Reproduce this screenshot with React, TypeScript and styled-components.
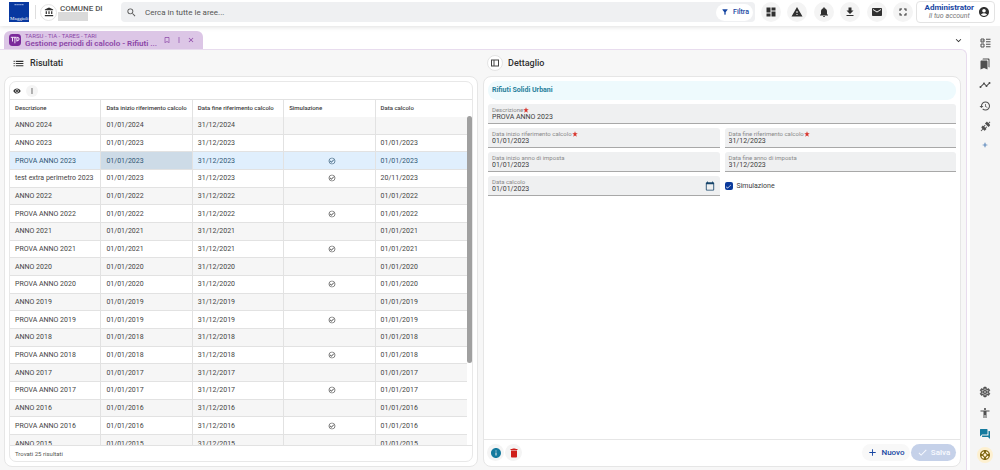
import React from "react";
import styled, { createGlobalStyle, css } from "styled-components";
import {
  MdAccountBalance, MdSearch, MdFilterAlt, MdDashboard, MdWarning, MdNotifications, MdDownload, MdEmail,
  MdFullscreen, MdAccountCircle, MdBookmarkBorder, MdMoreVert, MdClose, MdExpandMore, MdList,
  MdVisibility, MdCheckCircleOutline, MdBookmarks, MdTimeline, MdHistory, MdAdd, MdOutlineSettings,
  MdAccessibility, MdQuestionAnswer, MdSupport, MdInfo, MdDelete, MdCheck, MdCalendarToday,
} from "react-icons/md";

const Global = createGlobalStyle`
  * { box-sizing: border-box; }
  body { margin: 0; background: #fff; color: #3c3c3c; font-family: Roboto, "Liberation Sans", sans-serif; font-size: 7px; }
  button, input { font-family: inherit; font-size: inherit; color: inherit; margin: 0; padding: 0; border: 0; background: none; }
  svg { display: block; flex: none; }
`;

const Page = styled.div`
  display: flex;
  flex-direction: column;
  height: 100vh;
  overflow: hidden;
`;

const TopBar = styled.header`
  display: flex;
  align-items: center;
  flex: none;
  height: 26px;
  padding: 0 5px 2px 9px;
  box-shadow: 0 1px 5px rgba(0, 0, 0, 0.13);
`;

const Divider = styled.span`
  width: 1px;
  height: 14px;
  margin: 0 4px 0 6px;
  background: #dedede;
`;

const RoundButton = styled.button<{ $size: number; $outlined?: boolean; $plain?: boolean }>`
  display: flex;
  align-items: center;
  justify-content: center;
  flex: none;
  width: ${(p) => p.$size}px;
  height: ${(p) => p.$size}px;
  border-radius: 50%;
  color: #303030;
  background: ${(p) => (p.$outlined ? "#fff" : p.$plain ? "transparent" : "#f4f4f4")};
  ${(p) => p.$outlined && css`border: 1px solid #e4e4e4;`}
`;

const Entity = styled.div`
  width: 64px;
  padding: 2px 0 0 3px;
  font-size: 8px;
  line-height: 7px;
  font-weight: 500;
  color: #555;
`;

const Redacted = styled.div`
  width: 30px;
  height: 9px;
  margin-left: -2px;
  background: #dadada;
`;

const Search = styled.div`
  display: flex;
  align-items: center;
  flex: 1;
  height: 20px;
  padding: 0 2px 0 5px;
  border-radius: 4px;
  background: #eff0f2;
  color: #555;
`;

const SearchInput = styled.input`
  flex: 1;
  min-width: 0;
  padding-left: 8px;
  font-size: 8px;
  outline: 0;
  &::placeholder { color: #555; opacity: 1; }
`;

const FilterButton = styled.button`
  display: flex;
  align-items: center;
  gap: 4px;
  height: 17px;
  padding: 0 4px 0 5px;
  border-radius: 9px;
  background: #fff;
  color: #1746a2;
  font-size: 7px;
  font-weight: 500;
`;

const Tools = styled.nav`
  display: flex;
  justify-content: space-between;
  width: 152px;
  margin: 0 3px 0 6px;
`;

const Account = styled.button`
  display: flex;
  align-items: center;
  justify-content: flex-end;
  gap: 4px;
  width: 79px;
  height: 22px;
  padding: 0 4px 0 0;
  border: 1px solid #e3e3e3;
  border-radius: 4px;
  color: #303030;
  text-align: center;
`;

const AccountName = styled.strong`
  display: block;
  font-size: 8px;
  line-height: 8px;
  color: #1746a2;
`;

const AccountHint = styled.em`
  display: block;
  font-size: 7px;
  line-height: 8px;
  color: #777;
`;

const Body = styled.div`
  display: flex;
  flex: 1;
  min-height: 0;
`;

const Main = styled.main`
  display: flex;
  flex-direction: column;
  flex: 1;
  min-width: 0;
  padding-right: 3px;
`;

const TabBar = styled.div`
  display: flex;
  align-items: flex-end;
  justify-content: space-between;
  flex: none;
  height: 23px;
  padding: 0 0 0 4px;
`;

const Tab = styled.div`
  display: flex;
  align-items: center;
  width: 199px;
  height: 18px;
  padding: 0 6px 0 5px;
  border-radius: 6px 6px 0 0;
  background: #dcc6e6;
  color: #8b45a6;
`;

const TabText = styled.div`
  flex: 1;
  min-width: 0;
  padding-left: 4px;
`;

const TabArea = styled.div`
  font-size: 6px;
  line-height: 7px;
`;

const TabTitle = styled.div`
  font-size: 8px;
  line-height: 9px;
  font-weight: 600;
  white-space: nowrap;
`;

const TabButton = styled.button`
  display: flex;
  align-items: center;
  justify-content: center;
  width: 12px;
  height: 12px;
`;

const Workspace = styled.div`
  display: grid;
  grid-template-columns: 474fr 478fr;
  gap: 5px;
  flex: 1;
  min-height: 0;
  padding: 0 5px 3px 4px;
  border: 1px solid #e8dcee;
  border-left: 0;
  border-bottom: 0;
  border-top-right-radius: 6px;
  background: #f7f7f7;
`;

const Panel = styled.section`
  display: flex;
  flex-direction: column;
  min-width: 0;
  min-height: 0;
`;

const PanelHead = styled.div<{ $inset: number }>`
  display: flex;
  align-items: center;
  gap: 5px;
  flex: none;
  height: 26px;
  padding-left: ${(p) => p.$inset}px;
  color: #303030;
`;

const Heading = styled.h2`
  margin: 0;
  font-size: 9px;
  line-height: 12px;
  font-weight: 500;
`;

const Card = styled.div<{ $padded?: boolean }>`
  display: flex;
  flex-direction: column;
  flex: 1;
  min-height: 0;
  padding: ${(p) => (p.$padded ? "4px" : "0")};
  border: 1px solid #e6e6e6;
  border-radius: 8px;
  background: #fff;
`;

const ResultBox = styled.div`
  display: flex;
  flex-direction: column;
  flex: 1;
  min-height: 0;
  border: 1px solid #e8e8e8;
  border-radius: 7px;
  overflow: hidden;
`;

const ResultTools = styled.div`
  display: flex;
  align-items: center;
  gap: 3px;
  flex: none;
  height: 17px;
  padding-left: 1px;
`;

const TableArea = styled.div`
  display: flex;
  flex: 1;
  min-height: 0;
  overflow: hidden;
  border-top: 1px solid #e2e2e2;
`;

const TableColumn = styled.div`
  flex: 1;
  min-width: 0;
`;

const Table = styled.table`
  width: 100%;
  height: 353px;
  border-collapse: separate;
  border-spacing: 0;
  table-layout: fixed;
`;

const HeadCell = styled.th`
  height: 17px;
  padding: 0 0 2px 5px;
  border-right: 1px solid #e2e2e2;
  text-align: left;
  font-size: 6px;
  font-weight: 500;
  white-space: nowrap;
  &:last-child { border-right: 0; }
`;

const Cell = styled.td<{ $focused?: boolean }>`
  padding: 0 0 0 5px;
  border-right: 1px solid #e2e2e2;
  border-bottom: 1px solid #e2e2e2;
  white-space: nowrap;
  line-height: 10px;
  ${(p) => p.$focused && css`background: #cddbe7;`}
  &:last-child { border-right: 0; }
  svg { margin: 0 auto; }
`;

const Row = styled.tr<{ $selected?: boolean }>`
  color: #444;
  &:nth-child(odd) { background: #f6f6f6; }
  ${(p) => p.$selected && css`
    && { background: #e0effd; color: #2f5673; }
  `}
`;

const Track = styled.div`
  flex: none;
  width: 5px;
  padding-top: 16px;
`;

const Thumb = styled.div`
  height: 75%;
  border-radius: 3px;
  background: #a0a0a0;
`;

const ResultFoot = styled.div`
  flex: none;
  height: 16px;
  padding-left: 5px;
  border-top: 1px solid #e2e2e2;
  font-size: 6px;
  line-height: 16px;
  color: #555;
`;

const Form = styled.form`
  display: grid;
  grid-template-columns: 1fr 1fr;
  align-content: start;
  gap: 4px 5px;
  flex: 1;
  padding: 4px;
`;

const Banner = styled.div`
  grid-column: 1 / -1;
  height: 19px;
  padding-left: 4px;
  border-radius: 9px;
  background: #eefafd;
  color: #28809c;
  font-weight: 700;
  line-height: 19px;
`;

const FieldBox = styled.div<{ $wide?: boolean }>`
  display: flex;
  align-items: center;
  height: 20px;
  padding: 0 4px;
  border-bottom: 1px solid #a8a8a8;
  border-radius: 3px 3px 0 0;
  background: #eff0f1;
  ${(p) => p.$wide && css`grid-column: 1 / -1;`}
`;

const FieldText = styled.label`
  display: flex;
  flex-direction: column;
  flex: 1;
`;

const FieldLabel = styled.span`
  display: flex;
  align-items: center;
  height: 7px;
  font-size: 6px;
  line-height: 7px;
  color: #8a8a8a;
`;

const FieldInput = styled.input`
  height: 8px;
  line-height: 8px;
  outline: 0;
`;

const CheckLabel = styled.label`
  display: flex;
  align-items: center;
  gap: 4px;
`;

const Checkbox = styled.input`
  appearance: none;
  width: 8px;
  height: 8px;
  border-radius: 2px;
  background: #0b3a9c;
`;

const CheckMark = styled.span`
  display: grid;
  color: #fff;
  > * { grid-area: 1 / 1; place-self: center; }
  svg { pointer-events: none; }
`;

const Actions = styled.div`
  display: flex;
  align-items: center;
  gap: 1px;
  flex: none;
  height: 27px;
  padding: 0 4px 1px 3px;
  border-top: 1px solid #e6e6e6;
`;

const Push = styled.span`
  flex: 1;
`;

const PillButton = styled.button<{ $filled?: boolean }>`
  display: flex;
  align-items: center;
  justify-content: center;
  gap: 3px;
  width: ${(p) => (p.$filled ? 45 : 48)}px;
  height: 17px;
  border-radius: 9px;
  background: ${(p) => (p.$filled ? "#c5d1e9" : "#f8f8f8")};
  color: ${(p) => (p.$filled ? "#f8faff" : "#1746a2")};
  font-size: 8px;
  font-weight: 500;
`;

const Rail = styled.aside`
  display: flex;
  flex-direction: column;
  align-items: center;
  flex: none;
  width: 30px;
  padding: 6px 0 5px;
  background: #f5f5f5;
`;

const RailButton = styled.button<{ $color?: string; $short?: boolean }>`
  display: flex;
  align-items: center;
  justify-content: center;
  flex: none;
  width: 20px;
  height: ${(p) => (p.$short ? 16 : 21)}px;
  color: ${(p) => p.$color || "#505050"};
`;

const HelpDisc = styled.span`
  padding: 2px;
  border-radius: 50%;
  background: #fdf0d0;
`;

const Logo = () => (
  <svg width="20" height="20" viewBox="0 0 20 20" role="img" aria-label="Maggioli">
    <rect width="20" height="20" fill="#0838a0" />
    <path d="M5.5 2.7h9" stroke="#b9c8ec" strokeWidth="1" strokeDasharray="1.4 .5" />
    <text x="1" y="18" fill="#fff" fontFamily="Liberation Serif, serif" fontSize="5">Maggioli</text>
  </svg>
);

const ModuleIcon = () => (
  <svg width="12" height="12" viewBox="0 0 12 12">
    <rect width="12" height="12" rx="3.4" fill="#7b2a9b" />
    <path d="M1.8 3.3h5.200M3.500 3.300v4.200M5.900 3.300v6M5.900 4.500q.8-1.200 1.500-1.200M7.900 3.300v4.200M7.900 3.300q2.200-.2 2.200 1.700t-2.200 1.700" fill="none" stroke="#f2e4f7" strokeWidth="1" />
  </svg>
);

const SidePanelIcon = () => (
  <svg width="8" height="8" viewBox="0 0 8 8" fill="none" stroke="#444">
    <rect x=".5" y="1" width="7" height="6" />
    <path d="M3 1v6" />
  </svg>
);

const BallotIcon = () => (
  <svg width="11" height="10" viewBox="0 0 22 20" fill="none" stroke="currentColor" strokeWidth="2">
    <path d="M2 2h6v6H2zM2 12h6v6H2zM12 2.5h9M12 7.5h9M12 12.5h9M12 17.5h9" />
    <path d="M3.5 5 5 6.5 8 3" strokeWidth="1.4" />
  </svg>
);

const ConnectionIcon = () => (
  <svg width="11" height="11" viewBox="0 0 24 24" fill="currentColor">
    <path d="M21.4 7.5C22.2 8.3 22.2 9.6 21.4 10.3L18.6 13.1L10.8 5.3L13.6 2.5C14.4 1.7 15.7 1.7 16.4 2.5L18.2 4.3L21.2 1.3L22.6 2.7L19.6 5.7L21.4 7.5M15.6 13.3L14.2 11.9L11.4 14.7L9.3 12.6L12.1 9.8L10.7 8.4L7.9 11.2L6.4 9.8L3.6 12.6C2.8 13.4 2.8 14.7 3.6 15.4L5.4 17.2L1.4 21.2L2.8 22.6L6.8 18.6L8.6 20.4C9.4 21.2 10.7 21.2 11.4 20.4L14.2 17.6L12.8 16.2L15.6 13.3Z" />
  </svg>
);

const RequiredStar = () => (
  <svg width="6" height="6" viewBox="0 0 24 24" fill="#d8342c">
    <path d="M12 1l3 8h8l-6.500 5 2.500 8.500-7-5-7 5L7.500 14 1 9h8z" />
  </svg>
);

const SettingsIcon = styled(MdOutlineSettings)`
  path:last-child { stroke: currentColor; stroke-width: 1px; }
  path[fill="none"] { stroke: none; }
`;

type Result = { name: string; year: number; simulated?: boolean; calculated?: string };

const pair = (year: number): Result[] => [
  { name: `ANNO ${year}`, year, calculated: `01/01/${year}` },
  { name: `PROVA ANNO ${year}`, year, simulated: true, calculated: `01/01/${year}` },
];

const results: Result[] = [
  { name: "ANNO 2024", year: 2024 },
  ...pair(2023),
  { name: "test extra perimetro 2023", year: 2023, simulated: true, calculated: "20/11/2023" },
  ...[2022, 2021, 2020, 2019, 2018, 2017, 2016].flatMap(pair),
  { name: "ANNO 2015", year: 2015, calculated: "01/01/2015" },
];

const columns = ["Descrizione", "Data inizio riferimento calcolo", "Data fine riferimento calcolo", "Simulazione", "Data calcolo"];

const tools = [MdDashboard, MdWarning, MdNotifications, MdDownload, MdEmail, MdFullscreen];

type FieldProps = { label: string; value: string; required?: boolean; wide?: boolean; picker?: boolean };

const Field = ({ label, value, required, wide, picker }: FieldProps) => (
  <FieldBox $wide={wide}>
    <FieldText>
      <FieldLabel>{label}{required && <RequiredStar />}</FieldLabel>
      <FieldInput type="text" defaultValue={value} required={required} />
    </FieldText>
    {picker && <TabButton type="button"><MdCalendarToday size={10} color="#17456b" /></TabButton>}
  </FieldBox>
);

export default function App() {
  return (
    <Page>
      <Global />
      <TopBar>
        <Logo />
        <Divider />
        <RoundButton $size={17} $outlined><MdAccountBalance size={10} /></RoundButton>
        <Entity>COMUNE DI<Redacted /></Entity>
        <Search>
          <MdSearch size={11} />
          <SearchInput type="search" placeholder="Cerca in tutte le aree..." />
          <FilterButton><MdFilterAlt size={8} />Filtra</FilterButton>
        </Search>
        <Tools>
          {tools.map((Icon, i) => <RoundButton key={i} $size={20}><Icon size={12} /></RoundButton>)}
        </Tools>
        <Account>
          <span>
            <AccountName>Administrator</AccountName>
            <AccountHint>Il tuo account</AccountHint>
          </span>
          <MdAccountCircle size={12} />
        </Account>
      </TopBar>
      <Body>
        <Main>
          <TabBar>
            <Tab>
              <ModuleIcon />
              <TabText>
                <TabArea>TARSU - TIA - TARES - TARI</TabArea>
                <TabTitle>Gestione periodi di calcolo - Rifiuti ...</TabTitle>
              </TabText>
              <TabButton><MdBookmarkBorder size={8} /></TabButton>
              <TabButton><MdMoreVert size={8} /></TabButton>
              <TabButton><MdClose size={8} /></TabButton>
            </Tab>
            <RoundButton $size={18} $plain><MdExpandMore size={11} /></RoundButton>
          </TabBar>
          <Workspace>
            <Panel>
              <PanelHead $inset={8}>
                <MdList size={13} />
                <Heading>Risultati</Heading>
              </PanelHead>
              <Card $padded>
                <ResultBox>
                  <ResultTools>
                    <RoundButton $size={12} $plain><MdVisibility size={8} /></RoundButton>
                    <RoundButton $size={12}><MdMoreVert size={8} /></RoundButton>
                  </ResultTools>
                  <TableArea>
                    <TableColumn>
                      <Table>
                        <thead>
                          <tr>{columns.map((c) => <HeadCell key={c}>{c}</HeadCell>)}</tr>
                        </thead>
                        <tbody>
                          {results.map((r, i) => (
                            <Row key={r.name} $selected={i === 2}>
                              <Cell>{r.name}</Cell>
                              <Cell $focused={i === 2}>01/01/{r.year}</Cell>
                              <Cell>31/12/{r.year}</Cell>
                              <Cell>{r.simulated && <MdCheckCircleOutline size={8} />}</Cell>
                              <Cell>{r.calculated}</Cell>
                            </Row>
                          ))}
                        </tbody>
                      </Table>
                    </TableColumn>
                    <Track><Thumb /></Track>
                  </TableArea>
                  <ResultFoot>Trovati 25 risultati</ResultFoot>
                </ResultBox>
              </Card>
            </Panel>
            <Panel>
              <PanelHead $inset={4}>
                <RoundButton $size={16} $outlined><SidePanelIcon /></RoundButton>
                <Heading>Dettaglio</Heading>
              </PanelHead>
              <Card>
                <Form>
                  <Banner>Rifiuti Solidi Urbani</Banner>
                  <Field wide required label="Descrizione" value="PROVA ANNO 2023" />
                  <Field required label="Data inizio riferimento calcolo" value="01/01/2023" />
                  <Field required label="Data fine riferimento calcolo" value="31/12/2023" />
                  <Field label="Data inizio anno di imposta" value="01/01/2023" />
                  <Field label="Data fine anno di imposta" value="31/12/2023" />
                  <Field picker label="Data calcolo" value="01/01/2023" />
                  <CheckLabel>
                    <CheckMark>
                      <Checkbox type="checkbox" defaultChecked />
                      <MdCheck size={7} />
                    </CheckMark>
                    Simulazione
                  </CheckLabel>
                </Form>
                <Actions>
                  <RoundButton $size={17}><MdInfo size={12} color="#157a9e" /></RoundButton>
                  <RoundButton $size={17}><MdDelete size={12} color="#cf1f1a" /></RoundButton>
                  <Push />
                  <PillButton><MdAdd size={11} />Nuovo</PillButton>
                  <PillButton $filled disabled><MdCheck size={11} />Salva</PillButton>
                </Actions>
              </Card>
            </Panel>
          </Workspace>
        </Main>
        <Rail>
          <RailButton><BallotIcon /></RailButton>
          <RailButton><MdBookmarks size={12} /></RailButton>
          <RailButton><MdTimeline size={12} /></RailButton>
          <RailButton><MdHistory size={12} /></RailButton>
          <RailButton><ConnectionIcon /></RailButton>
          <RailButton $short $color="#0b4f9e"><MdAdd size={8} /></RailButton>
          <Push />
          <RailButton><SettingsIcon size={12} /></RailButton>
          <RailButton><MdAccessibility size={12} /></RailButton>
          <RailButton $color="#157a9e"><MdQuestionAnswer size={12} /></RailButton>
          <RailButton $color="#7d6510"><HelpDisc><MdSupport size={12} /></HelpDisc></RailButton>
        </Rail>
      </Body>
    </Page>
  );
}
